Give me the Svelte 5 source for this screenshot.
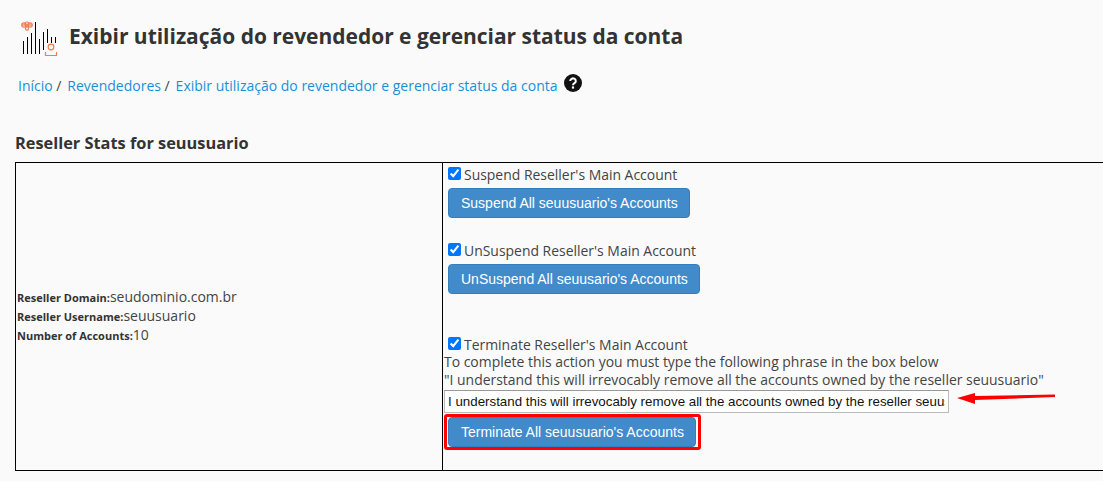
<script>
  const owner = 'seuusuario';
  const phrase = `I understand this will irrevocably remove all the accounts owned by the reseller ${owner}`;
</script>

<div class="page">
  <header class="head">
    <svg class="logo" width="44" height="40" viewBox="15 16 44 40" aria-hidden="true">
      <path d="M23.500 41V54M27.500 37V54M31.500 33V54M35.500 22V54M39.500 39V54M43.500 32V50M47.500 29V43M51.500 37V43M55.500 37V43" stroke="#000" stroke-width="1" fill="none"/>
      <g stroke="#f47b50" stroke-width="1.200" fill="none">
        <circle cx="51" cy="47" r="2.800"/>
        <path d="M45.500 52v3.500h11V52"/>
        <path d="M21.500 25h11"/>
        <ellipse cx="24" cy="25" rx="2.200" ry="2.200"/>
        <ellipse cx="30" cy="25" rx="2.200" ry="2.200"/>
        <ellipse cx="27" cy="24" rx="2" ry="2"/>
        <circle cx="27" cy="28.500" r="1.600"/>
      </g>
    </svg>
    <h1>Exibir utilização do revendedor e gerenciar status da conta</h1>
  </header>

  <nav class="crumbs">
    <a href="#a">Início</a><span class="sep">/</span>
    <a href="#a">Revendedores</a><span class="sep">/</span>
    <a href="#a">Exibir utilização do revendedor e gerenciar status da conta</a>
    <svg class="help" width="18" height="18" viewBox="0 0 18 18" aria-hidden="true">
      <circle cx="9" cy="9" r="9" fill="#111"/>
      <path d="M6.200 7a2.800 2.600 0 1 1 4.300 2.200c-1 .6-1.500 1-1.500 2" fill="none" stroke="#fff" stroke-width="2"/>
      <rect x="7.900" y="12.400" width="2.200" height="2.200" fill="#fff"/>
    </svg>
  </nav>

  <h2>Reseller Stats for {owner}</h2>

  <div class="stats">
    <div class="info">
      <div class="row"><b>Reseller Domain:</b>seudominio.com.br</div>
      <div class="row"><b>Reseller Username:</b>{owner}</div>
      <div class="row"><b>Number of Accounts:</b>10</div>
    </div>
    <div class="actions">
      <section class="one">
        <label><input type="checkbox" checked />Suspend Reseller's Main Account</label>
        <button>Suspend All {owner}'s Accounts</button>
      </section>
      <section class="two">
        <label><input type="checkbox" checked />UnSuspend Reseller's Main Account</label>
        <button>UnSuspend All seuusario's Accounts</button>
      </section>
      <section class="three">
        <label><input type="checkbox" checked />Terminate Reseller's Main Account</label>
        <p>To complete this action you must type the following phrase in the box below</p>
        <p>"{phrase}"</p>
        <div class="confirm">
          <input class="phrase" type="text" value={phrase} />
          <svg class="arrow" width="100" height="14" viewBox="0 0 100 14" aria-hidden="true">
            <path d="M0 7 18 2 18 5 98 3.500 98 6 18 9 18 13Z" fill="#f00"/>
          </svg>
        </div>
        <div class="mark"><button>Terminate All {owner}'s Accounts</button></div>
      </section>
    </div>
  </div>
</div>

<style>
  :global(body) { margin: 0; background: #fafafa; overflow: hidden; }
  .page {
    width: 1103px; height: 481px; overflow: hidden; box-sizing: border-box;
    font-family: "Open Sans", sans-serif; color: #333; position: relative;
    padding: 16px 0 0 15px;
  }
  .head { display: flex; align-items: center; gap: 10px; height: 40px; }
  .logo { flex: none; overflow: visible; }
  h1 { margin: 0; font-size: 20.960px; font-weight: 700; color: #333; white-space: nowrap; }
  .crumbs { display: flex; align-items: center; margin: 17px 0 0 3px; height: 24px; font-size: 14px; white-space: nowrap; }
  .crumbs a { color: #1a8fd8; text-decoration: none; }
  .sep { margin: 0 6px 0 3.500px; color: #444; }
  .help { margin: 0 0 4px 6px; }
  h2 { margin: 35px 0 0; font-size: 16.350px; font-weight: 700; color: #333; line-height: 22px; height: 25px; }
  .stats {
    display: grid; grid-template-columns: 427px 700px; width: 1130px; height: 309px;
    border: 1px solid #000; box-sizing: border-box; margin-top: 5px;
  }
  .info {
    border-right: 1px solid #000; display: flex; flex-direction: column;
    justify-content: center; padding: 0 0 2px 1px; font-size: 14px; color: #444;
  }
  .row { height: 19px; line-height: 19px; white-space: nowrap; }
  .info b { font-size: 11px; font-weight: 700; color: #333; }
  .actions { font-size: 13.950px; color: #444; padding-left: 1px; line-height: 18px; }
  section { display: flex; flex-direction: column; align-items: flex-start; }
  .one { margin-top: 2px; }
  .two { margin-top: 23px; }
  .three { margin-top: 41px; }
  label { display: flex; align-items: flex-start; margin-left: 4px; height: 18px; line-height: 20px; }
  label input { align-self: center; width: 13px; height: 13px; margin: -1px 3px 1px 0; accent-color: #0075ff; }
  p { margin: 0; }
  section button {
    font: 14px/20px "Liberation Sans", Arial, sans-serif; color: #fff; background: #428bca;
    border: 1px solid #357ebd; border-radius: 4px; padding: 4px 11.500px 4px 12px; height: 30px; margin: 5px 0 0 4px;
    white-space: nowrap;
  }
  .confirm { position: relative; margin-top: 1px; }
  .phrase {
    width: 505px; height: 23px; box-sizing: border-box; border: 1px solid #bbb; border-top-color: #999;
    padding: 1px 3px; font: 13.333px "Liberation Sans", Arial, sans-serif; color: #111; background: #fff; margin: 0; display: block;
  }
  .arrow { position: absolute; left: 513px; top: 1px; }
  .mark { border: 3px solid #f00; border-radius: 3px; margin-top: 1px; padding: 0 2px 0 1px; height: 36px; box-sizing: border-box; background: #fff; display: flex; align-items: center; }
  .mark button { margin: 0; }
</style>
